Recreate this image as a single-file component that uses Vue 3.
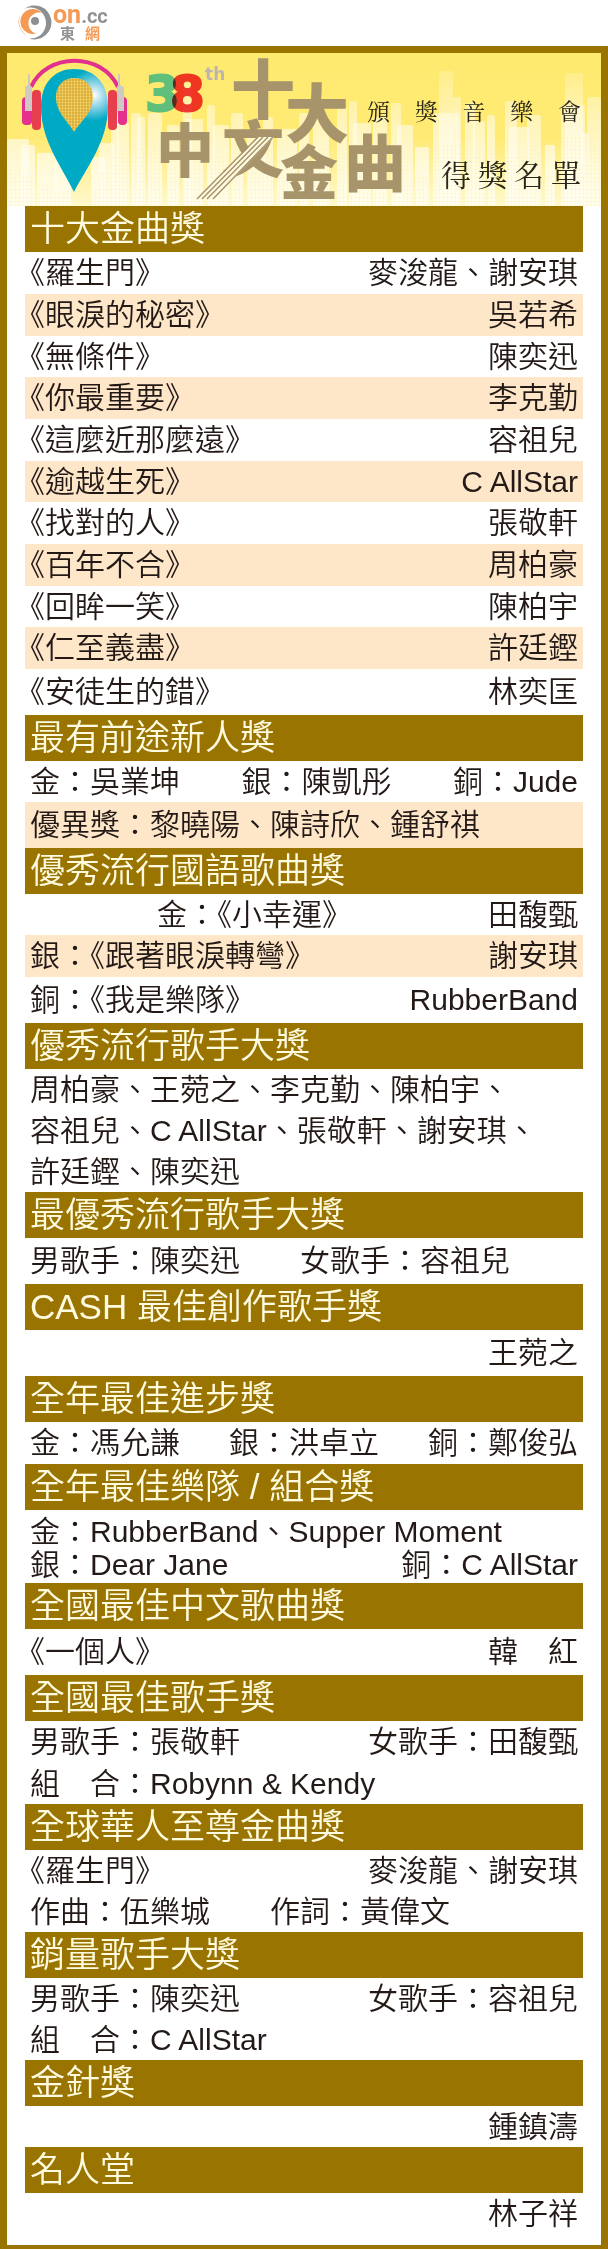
<script setup>
const split = (text) => text.split(/(《)/).filter(Boolean)

const sections = [
  {
    title: '十大金曲獎',
    rows: [
      { cells: ['《羅生門》', '麥浚龍、謝安琪'], size: 'm' },
      { cells: ['《眼淚的秘密》', '吳若希'], size: 'm', tint: true },
      { cells: ['《無條件》', '陳奕迅'], size: 's' },
      { cells: ['《你最重要》', '李克勤'], size: 'm', tint: true },
      { cells: ['《這麼近那麼遠》', '容祖兒'], size: 'm' },
      { cells: ['《逾越生死》', 'C AllStar'], size: 's', tint: true },
      { cells: ['《找對的人》', '張敬軒'], size: 'm' },
      { cells: ['《百年不合》', '周柏豪'], size: 'm', tint: true },
      { cells: ['《回眸一笑》', '陳柏宇'], size: 's' },
      { cells: ['《仁至義盡》', '許廷鏗'], size: 'm', tint: true },
      { cells: ['《安徒生的錯》', '林奕匡'], size: 'l' }
    ]
  },
  {
    title: '最有前途新人獎',
    rows: [
      { cells: ['金：吳業坤', '銀：陳凱彤', '銅：Jude'], size: 's' },
      { cells: ['優異獎：黎曉陽、陳詩欣、鍾舒祺'], size: 'l', tint: true }
    ]
  },
  {
    title: '優秀流行國語歌曲獎',
    rows: [
      { cells: ['金：《小幸運》', '田馥甄'], size: 's', indent: true },
      { cells: ['銀：《跟著眼淚轉彎》', '謝安琪'], size: 'm', tint: true },
      { cells: ['銅：《我是樂隊》', 'RubberBand'], size: 'l' }
    ]
  },
  {
    title: '優秀流行歌手大獎',
    rows: [
      { cells: ['周柏豪、王菀之、李克勤、陳柏宇、'], size: 's' },
      { cells: ['容祖兒、C AllStar、張敬軒、謝安琪、'], size: 's' },
      { cells: ['許廷鏗、陳奕迅'], size: 's' }
    ]
  },
  { title: '最優秀流行歌手大獎', rows: [{ cells: ['男歌手：陳奕迅', '女歌手：容祖兒'], size: 'l', packed: true }] },
  { title: 'CASH 最佳創作歌手獎', rows: [{ cells: ['王菀之'], size: 'l', end: true }] },
  { title: '全年最佳進步獎', rows: [{ cells: ['金：馮允謙', '銀：洪卓立', '銅：鄭俊弘'], size: 'm' }] },
  {
    title: '全年最佳樂隊 / 組合獎',
    dense: true,
    rows: [
      { cells: ['金：RubberBand、Supper Moment'], size: 'xs' },
      { cells: ['銀：Dear Jane', '銅：C AllStar'], size: 'xs' }
    ]
  },
  { title: '全國最佳中文歌曲獎', rows: [{ cells: ['《一個人》', '韓　紅'], size: 'l' }] },
  {
    title: '全國最佳歌手獎',
    rows: [
      { cells: ['男歌手：張敬軒', '女歌手：田馥甄'], size: 'm' },
      { cells: ['組　合：Robynn & Kendy'], size: 's' }
    ]
  },
  {
    title: '全球華人至尊金曲獎',
    rows: [
      { cells: ['《羅生門》', '麥浚龍、謝安琪'], size: 's' },
      { cells: ['作曲：伍樂城', '作詞：黃偉文'], size: 's', packed: true }
    ]
  },
  {
    title: '銷量歌手大獎',
    rows: [
      { cells: ['男歌手：陳奕迅', '女歌手：容祖兒'], size: 's' },
      { cells: ['組　合：C AllStar'], size: 's' }
    ]
  },
  { title: '金針獎', rows: [{ cells: ['鍾鎮濤'], size: 's', end: true }] },
  { title: '名人堂', rows: [{ cells: ['林子祥'], size: 's', end: true }] }
]

// Skyline blocks: x, top, width
const skyline = [
  [0, 86, 22], [14, 92, 14], [30, 100, 20], [48, 108, 16], [84, 104, 14], [92, 90, 16], [104, 62, 8],
  [110, 70, 12], [124, 60, 10], [130, 64, 8], [141, 60, 14], [160, 72, 12], [176, 30, 9], [178, 66, 18],
  [200, 52, 8], [206, 72, 16], [224, 60, 12], [240, 78, 18], [256, 64, 10], [270, 76, 20], [292, 60, 10],
  [306, 66, 16], [330, 54, 10], [342, 48, 8], [346, 70, 18], [366, 64, 14], [384, 50, 10], [390, 72, 16],
  [408, 94, 14], [432, 18, 14], [426, 60, 26], [446, 44, 8], [458, 50, 10], [466, 68, 12], [480, 62, 8],
  [498, 48, 12], [502, 74, 20], [520, 62, 14], [538, 92, 10], [558, 20, 18], [554, 52, 24], [574, 80, 8],
  [580, 44, 14]
]
</script>

<template>
  <div class="page">
    <header class="brand">
      <svg class="brand-mark" viewBox="0 0 36 36" aria-hidden="true">
        <path d="M8 5A17 17 0 1 1 13 34.500A15.500 15.500 0 1 0 8 5Z" fill="#8d9092" />
        <path d="M26 9A12.500 12.500 0 1 0 20 29.500A10.500 10.500 0 1 1 26 9Z" fill="#f49a54" />
        <path d="M5 9A16.500 16.500 0 0 0 13 33A17.500 17.500 0 0 1 5 9Z" fill="#f49a54" />
        <circle cx="19" cy="17" r="4" fill="#8d9092" />
      </svg>
      <div class="brand-words">
        <div class="brand-name"><span class="orange">on</span><span class="cc">.cc</span></div>
        <div class="brand-cn"><span>東</span><span class="orange">網</span></div>
      </div>
    </header>

    <main class="frame">
      <div class="banner">
        <svg class="art" viewBox="0 0 594 153" role="img" aria-label="38th 十大中文金曲">
          <defs>
            <linearGradient id="sky" x1="0" y1="0" x2="0" y2="1">
              <stop offset="0" stop-color="#ffea70" />
              <stop offset="0.55" stop-color="#ffea74" />
              <stop offset="1" stop-color="#fff9cc" />
            </linearGradient>
            <linearGradient id="tower" gradientUnits="userSpaceOnUse" x1="0" y1="15" x2="0" y2="153">
              <stop offset="0" stop-color="#fff" stop-opacity="0.15" />
              <stop offset="0.45" stop-color="#fffdf0" stop-opacity="0.6" />
              <stop offset="1" stop-color="#fffef2" stop-opacity="0.85" />
            </linearGradient>
            <pattern id="windows" width="4" height="4" patternUnits="userSpaceOnUse">
              <path d="M0 0H4M0 0V4" stroke="#ffeb80" stroke-width="1" opacity="0.4" />
            </pattern>
            <pattern id="dots" width="3" height="3" patternUnits="userSpaceOnUse">
              <rect width="3" height="3" fill="#dcae3c" />
              <circle cx="1.500" cy="1.500" r="0.900" fill="#f7dc70" />
            </pattern>
            <radialGradient id="pin" gradientUnits="userSpaceOnUse" cx="87" cy="42" r="26">
              <stop offset="0" stop-color="#fff" />
              <stop offset="0.35" stop-color="#a8dced" />
              <stop offset="1" stop-color="#00a9c4" />
            </radialGradient>
          </defs>
          <rect width="594" height="153" fill="url(#sky)" />
          <g v-for="(b, i) in skyline" :key="i">
            <rect :x="b[0]" :y="b[1]" :width="b[2]" :height="153 - b[1]" rx="2" fill="url(#tower)" />
            <rect :x="b[0]" :y="b[1] + 30" :width="b[2]" :height="123 - b[1]" fill="url(#windows)" />
          </g>

          <path d="M24 34C40 -1 95 -1 111 34" fill="none" stroke="#e2308f" stroke-width="4" />
          <rect x="15" y="44" width="10" height="28" rx="4" fill="#e5308e" />
          <rect x="111" y="44" width="9" height="28" rx="4" fill="#e5308e" />
          <path d="M18 58V34L21 32V21H23V32L25 34V58Z" fill="#cfc9c4" />
          <path d="M117 58V34L113 32V21H111V32L110 34V58Z" fill="#cfc9c4" />
          <rect x="25" y="37" width="9" height="40" rx="4" fill="#e7404c" />
          <rect x="101" y="37" width="9" height="40" rx="4" fill="#e7404c" />
          <path d="M67 139C55 114 34 88 34 54C34 29 48 16 67 16C87 16 101 29 101 54C101 88 80 114 67 139Z" fill="url(#pin)" />
          <path d="M67 79C61 68 49 60 49 44C49 32 57 25 67 25C78 25 86 32 86 44C86 60 74 68 67 79Z" fill="url(#dots)" />

          <g class="digits">
            <text x="138" y="58" fill="#5fbf7b" stroke="#5fbf7b">3</text>
            <text class="over" x="163" y="58" fill="#ee3a48" stroke="#ee3a48">8</text>
          </g>
          <text class="th" x="198" y="27">th</text>
          <g class="song">
            <text x="224" y="60" font-size="64">十</text>
            <text x="278" y="84" font-size="64">大</text>
            <text x="149" y="119" font-size="58">中</text>
            <text x="215" y="120" font-size="62">文</text>
            <text x="273" y="141" font-size="58">金</text>
            <text x="337" y="134" font-size="62">曲</text>
          </g>
          <path d="M252 84L190 147H206L267 84Z" fill="#fffbe0" />
          <path d="M251 84L190 146M256 84L195 146M261 84L200 146M266 84L206 146" stroke="#a8946b" stroke-width="1.500" />
        </svg>
        <div class="caption">
          <p class="line small"><span v-for="c in '頒獎音樂會'" :key="c">{{ c }}</span></p>
          <p class="line large"><span v-for="c in '得獎名單'" :key="c">{{ c }}</span></p>
        </div>
      </div>

      <div class="board">
        <section v-for="s in sections" :key="s.title">
          <h2>{{ s.title }}</h2>
          <div class="rows" :class="{ dense: s.dense }">
            <div
              v-for="(r, i) in s.rows"
              :key="i"
              class="row"
              :class="[r.size, { tint: r.tint, indent: r.indent, packed: r.packed, end: r.end }]"
            >
              <span v-for="cell in r.cells" :key="cell"><span
                v-for="(part, j) in split(cell)"
                :key="j"
                :class="{ open: part === '《' }"
              >{{ part }}</span></span>
            </div>
          </div>
        </section>
      </div>
    </main>
  </div>
</template>

<style>
body {
  margin: 0;
  background: #fff;
}
</style>

<style scoped>
.page {
  font-family: "Liberation Sans", "Noto Sans CJK TC", sans-serif;
  color: #231a17;
}

.brand {
  display: flex;
  align-items: flex-start;
  gap: 1px;
  box-sizing: border-box;
  height: 46px;
  padding: 4px 16px 0;
}

.brand-mark {
  width: 36px;
  height: 36px;
}

.brand-words {
  font-family: Roboto, "Noto Sans CJK TC", sans-serif;
  font-weight: 700;
  color: #909294;
}

.brand-name {
  font-size: 25px;
  line-height: 21px;
}

.brand-name .cc {
  font-size: 20px;
}

.orange {
  color: #f49a54;
}

.brand-cn {
  display: flex;
  gap: 10px;
  padding-left: 7px;
  font-size: 15px;
  line-height: 14px;
}

.frame {
  border: 7px solid #997400;
  border-bottom-width: 6px;
  background: #fff;
}

.banner {
  position: relative;
}

.art {
  display: block;
  width: 100%;
  overflow: visible;
}

.digits {
  font: 700 50px "DejaVu Sans", sans-serif;
  stroke-width: 2px;
}

.over {
  mix-blend-mode: multiply;
}

.th {
  font: 700 17px "DejaVu Sans", sans-serif;
  fill: #bdb4b2;
}

.song {
  font-family: "Noto Sans CJK TC", sans-serif;
  font-weight: 900;
  fill: #a8946b;
}

.caption {
  position: absolute;
  top: 41px;
  right: 20px;
  width: 214px;
  color: #2b2718;
  font-family: "AR PL UKai TW", "Noto Serif CJK TC", "Noto Sans CJK TC", sans-serif;
}

.line {
  display: flex;
  justify-content: space-between;
  margin: 0;
}

.small {
  font-size: 23px;
  line-height: 34px;
}

.large {
  margin: 21px 0 0 74px;
  font-size: 30px;
  line-height: 48px;
}

.board {
  padding: 0 18px 11px;
}

h2 {
  margin: 0;
  padding: 0 5px;
  background: #997400;
  color: #fffbe0;
  font-size: 35px;
  font-weight: 350;
  line-height: 46px;
}

.rows {
  font-size: 30px;
  font-weight: 350;
}

.dense {
  padding: 5px 0 2px;
}

.row {
  display: flex;
  justify-content: space-between;
  padding: 0 5px;
  line-height: 41px;
  white-space: nowrap;
  text-spacing-trim: space-all;
}

.row.xs {
  line-height: 33px;
}

.row.m {
  line-height: 42px;
}

.row.l {
  line-height: 46px;
}

.tint {
  background: #fee6c9;
}

.indent {
  padding-left: 132px;
}

.packed {
  justify-content: flex-start;
  gap: 60px;
}

.end {
  justify-content: flex-end;
}

.open {
  font-feature-settings: "halt";
}
</style>
